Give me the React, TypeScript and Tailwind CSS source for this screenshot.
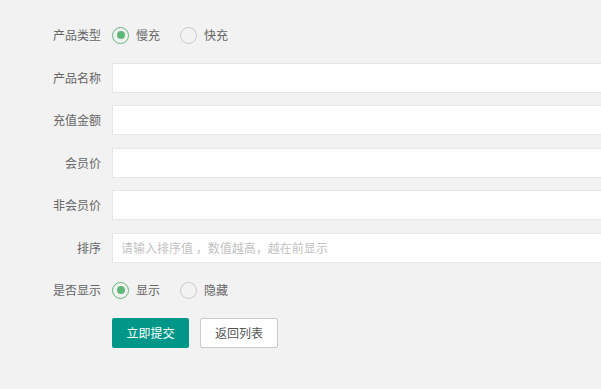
const Radio = ({ label, checked }: { label: string; checked?: boolean }) => (
  <label className="flex items-center gap-[7px] mr-[20px]">
    <span
      className={
        checked
          ? "w-[17px] h-[17px] rounded-full border-[1.5px] border-[#5FB878] flex items-center justify-center"
          : "w-[17px] h-[17px] rounded-full border-[1.5px] border-[#c9c9c9]"
      }
    >
      {checked && <span className="w-[8px] h-[8px] rounded-full bg-[#5FB878]"></span>}
    </span>
    <span>{label}</span>
  </label>
);

const Row = ({ label, children }: { label: string; children: React.ReactNode }) => (
  <div className="flex items-center h-[30px] mb-[12.5px]">
    <div className="w-[101px] shrink-0 text-right">{label}</div>
    <div className="ml-[11px] flex items-center h-full">{children}</div>
  </div>
);

const Input = ({ placeholder }: { placeholder?: string }) => (
  <input
    className="w-[600px] h-[30px] bg-white border border-[#e6e6e6] px-[8px] outline-none placeholder:text-[#c2c2c2] text-[12px]"
    placeholder={placeholder}
  />
);

export default function App() {
  return (
    <div
      className="w-screen h-screen overflow-hidden bg-[#f2f2f2] pt-[20px] text-[12px] text-[#666]"
      style={{ fontFamily: '"Noto Sans CJK SC", "Microsoft YaHei", sans-serif' }}
    >
      <Row label="产品类型">
        <Radio label="慢充" checked />
        <Radio label="快充" />
      </Row>
      <Row label="产品名称">
        <Input />
      </Row>
      <Row label="充值金额">
        <Input />
      </Row>
      <Row label="会员价">
        <Input />
      </Row>
      <Row label="非会员价">
        <Input />
      </Row>
      <Row label="排序">
        <Input placeholder="请输入排序值 ，数值越高，越在前显示" />
      </Row>
      <Row label="是否显示">
        <Radio label="显示" checked />
        <Radio label="隐藏" />
      </Row>
      <div className="flex ml-[112px] mt-[0px] gap-[11px]">
        <button className="w-[77px] h-[30px] rounded-[2px] bg-[#009688] text-white text-[12px]">
          立即提交
        </button>
        <button className="w-[78px] h-[30px] rounded-[2px] bg-white border border-[#c9c9c9] text-[#555] text-[12px]">
          返回列表
        </button>
      </div>
    </div>
  );
}
